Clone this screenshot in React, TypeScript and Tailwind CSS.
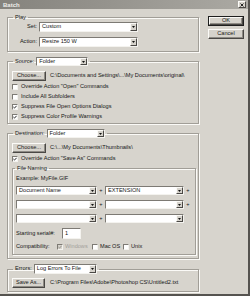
import type { ReactNode } from "react";

const sunken = "border border-[#7d7a74] border-r-[#f4f3ef] border-b-[#f4f3ef]";
const raised = "border border-[#fbfaf7] border-r-[#4a4845] border-b-[#4a4845]";
const etched =
  "border border-[#a19e97] shadow-[inset_1px_1px_0_#fbfaf7,1px_1px_0_#fbfaf7]";

function Arrow() {
  return (
    <div className={`flex h-full w-[7px] items-center justify-center bg-[#d6d3cc] ${raised}`}>
      <svg width="3" height="2" viewBox="0 0 3 2">
        <path d="M0 0 H3 L1.5 2 Z" fill="#111" />
      </svg>
    </div>
  );
}

function Select({ value = "", className = "" }: { value?: string; className?: string }) {
  return (
    <div className={`flex shrink-0 items-stretch bg-white ${sunken} ${className}`}>
      <div className="flex flex-1 items-center overflow-hidden whitespace-nowrap px-[2px] text-[5.6px] leading-none">
        {value}
      </div>
      <Arrow />
    </div>
  );
}

function Button({ children, className = "" }: { children: ReactNode; className?: string }) {
  return (
    <div
      className={`flex shrink-0 items-center justify-center bg-[#d6d3cc] text-[5.6px] leading-none shadow-[inset_-1px_-1px_0_#8e8b85] ${raised} ${className}`}
    >
      {children}
    </div>
  );
}

function Check({ checked = false, disabled = false }: { checked?: boolean; disabled?: boolean }) {
  return (
    <div
      className={`flex h-[6px] w-[6px] shrink-0 items-center justify-center ${sunken} ${
        disabled ? "bg-[#d6d3cc]" : "bg-white"
      }`}
    >
      {checked && (
        <svg width="4" height="4" viewBox="0 0 4 4">
          <path
            d="M0.4 2 L1.5 3.1 L3.6 0.8"
            fill="none"
            stroke={disabled ? "#8e8b85" : "#111"}
            strokeWidth="0.9"
          />
        </svg>
      )}
    </div>
  );
}

function CheckRow({ label, checked = false }: { label: string; checked?: boolean }) {
  return (
    <div className="flex h-[10px] items-center gap-[3px]">
      <Check checked={checked} />
      <span>{label}</span>
    </div>
  );
}

export default function App() {
  return (
    <div className="flex h-[296px] w-[250px] flex-col overflow-hidden border-r-2 border-b-2 border-[#55534f] bg-[#d7d4cd] font-['Liberation_Sans',Arial,sans-serif] text-[5.6px] leading-none text-[#161616]">
      {/* title bar */}
      <div className="flex h-[9px] shrink-0 items-center justify-between bg-gradient-to-r from-[#85837d] to-[#aba9a3] pl-[3px] pr-[2px]">
        <span className="text-[6px] font-bold text-[#eeede9]">Batch</span>
        <div className={`flex h-[7px] w-[8px] items-center justify-center bg-[#d6d3cc] ${raised}`}>
          <svg width="4" height="4" viewBox="0 0 4 4">
            <path d="M0.5 0.5 L3.5 3.5 M3.5 0.5 L0.5 3.5" stroke="#111" strokeWidth="0.9" />
          </svg>
        </div>
      </div>

      <div className="flex pl-[7px] pt-[5px]">
        {/* left column */}
        <div className="flex w-[192px] flex-col">
          {/* Play */}
          <fieldset className={etched}>
            <legend className="ml-[5px] px-[2px] leading-[6px]">Play</legend>
            <div className="flex flex-col gap-[5px] pt-[2px] pb-[4px]">
              <div className="flex items-center">
                <span className="w-[31px] pr-[2px] text-right">Set:</span>
                <Select value="Custom" className="h-[10px] w-[99px]" />
              </div>
              <div className="flex items-center">
                <span className="w-[31px] pr-[2px] text-right">Action:</span>
                <Select value="Resize 150 W" className="h-[10px] w-[99px]" />
              </div>
            </div>
          </fieldset>

          {/* Source */}
          <fieldset className={`mt-[5px] ${etched}`}>
            <legend className="ml-[5px] flex items-center px-[2px]">
              <span>Source:</span>
              <Select value="Folder" className="ml-[2px] h-[9px] w-[52px]" />
            </legend>
            <div className="flex flex-col pl-[4px] pb-[1px]">
              <div className="mt-[5px] flex items-center">
                <Button className="h-[10px] w-[34px]">Choose...</Button>
                <span className="ml-[4px] whitespace-nowrap">
                  C:\Documents and Settings\...\My Documents\original\
                </span>
              </div>
              <div className="mt-[1px]">
                <CheckRow label={'Override Action "Open" Commands'} />
                <CheckRow label="Include All Subfolders" />
                <CheckRow label="Suppress File Open Options Dialogs" checked />
                <CheckRow label="Suppress Color Profile Warnings" checked />
              </div>
            </div>
          </fieldset>

          {/* Destination */}
          <fieldset className={`mt-[5px] ${etched}`}>
            <legend className="ml-[5px] flex items-center px-[2px]">
              <span>Destination:</span>
              <Select value="Folder" className="ml-[2px] h-[9px] w-[58px]" />
            </legend>
            <div className="flex flex-col pl-[4px] pr-[2px] pb-[3px]">
              <div className="mt-[5px] flex items-center">
                <Button className="h-[10px] w-[34px]">Choose...</Button>
                <span className="ml-[4px] whitespace-nowrap">C:\...\My Documents\Thumbnails\</span>
              </div>
              <div className="mt-[1px]">
                <CheckRow label={'Override Action "Save As" Commands'} checked />
              </div>

              {/* File Naming */}
              <fieldset className={`mt-[1px] ${etched}`}>
                <legend className="ml-[2px] px-[2px] leading-[6px]">File Naming</legend>
                <div className="flex flex-col pl-[3px] pb-[2px]">
                  <div className="mt-[4px] flex h-[8px] items-center">Example: MyFile.GIF</div>
                  {[
                    ["Document Name", "EXTENSION", true],
                    ["", "", true],
                    ["", "", false],
                  ].map(([left, right, plus], i) => (
                    <div key={i} className={`flex h-[9px] items-center ${i === 0 ? "mt-[3px]" : "mt-[5px]"}`}>
                      <Select value={left as string} className="h-[9px] w-[81px]" />
                      <span className="w-[8px] text-center">+</span>
                      <Select value={right as string} className="h-[9px] w-[79px]" />
                      {plus && <span className="w-[8px] text-center">+</span>}
                    </div>
                  ))}
                  <div className="mt-[5px] flex h-[11px] items-center">
                    <span className="w-[46px]">Starting serial#:</span>
                    <div className={`flex h-[11px] w-[19px] items-center bg-white px-[2px] ${sunken}`}>1</div>
                  </div>
                  <div className="mt-[3px] flex h-[10px] items-center">
                    <span className="w-[41px]">Compatibility:</span>
                    <div className="flex w-[35px] items-center gap-[2px]">
                      <Check checked disabled />
                      <span className="text-[#a3a09a]">Windows</span>
                    </div>
                    <div className="flex w-[31px] items-center gap-[2px]">
                      <Check />
                      <span>Mac OS</span>
                    </div>
                    <div className="flex items-center gap-[2px]">
                      <Check />
                      <span>Unix</span>
                    </div>
                  </div>
                </div>
              </fieldset>
            </div>
          </fieldset>

          {/* Errors */}
          <fieldset className={`mt-[5px] ${etched}`}>
            <legend className="ml-[5px] flex items-center px-[2px]">
              <span>Errors:</span>
              <Select value="Log Errors To File" className="ml-[2px] h-[10px] w-[63px]" />
            </legend>
            <div className="flex pl-[4px] pb-[3px]">
              <div className="mt-[4px] flex items-center">
                <Button className="h-[10px] w-[33px]">Save As...</Button>
                <span className="ml-[5px] whitespace-nowrap">
                  C:\Program Files\Adobe\Photoshop CS\Untitled2.txt
                </span>
              </div>
            </div>
          </fieldset>
        </div>

        {/* right column */}
        <div className="ml-[9px] flex w-[36px] flex-col pt-[2px]">
          <div className="border border-[#1e1e1e]">
            <Button className="h-[8px] w-full">OK</Button>
          </div>
          <Button className="mt-[3px] h-[10px] w-full">Cancel</Button>
        </div>
      </div>
    </div>
  );
}
